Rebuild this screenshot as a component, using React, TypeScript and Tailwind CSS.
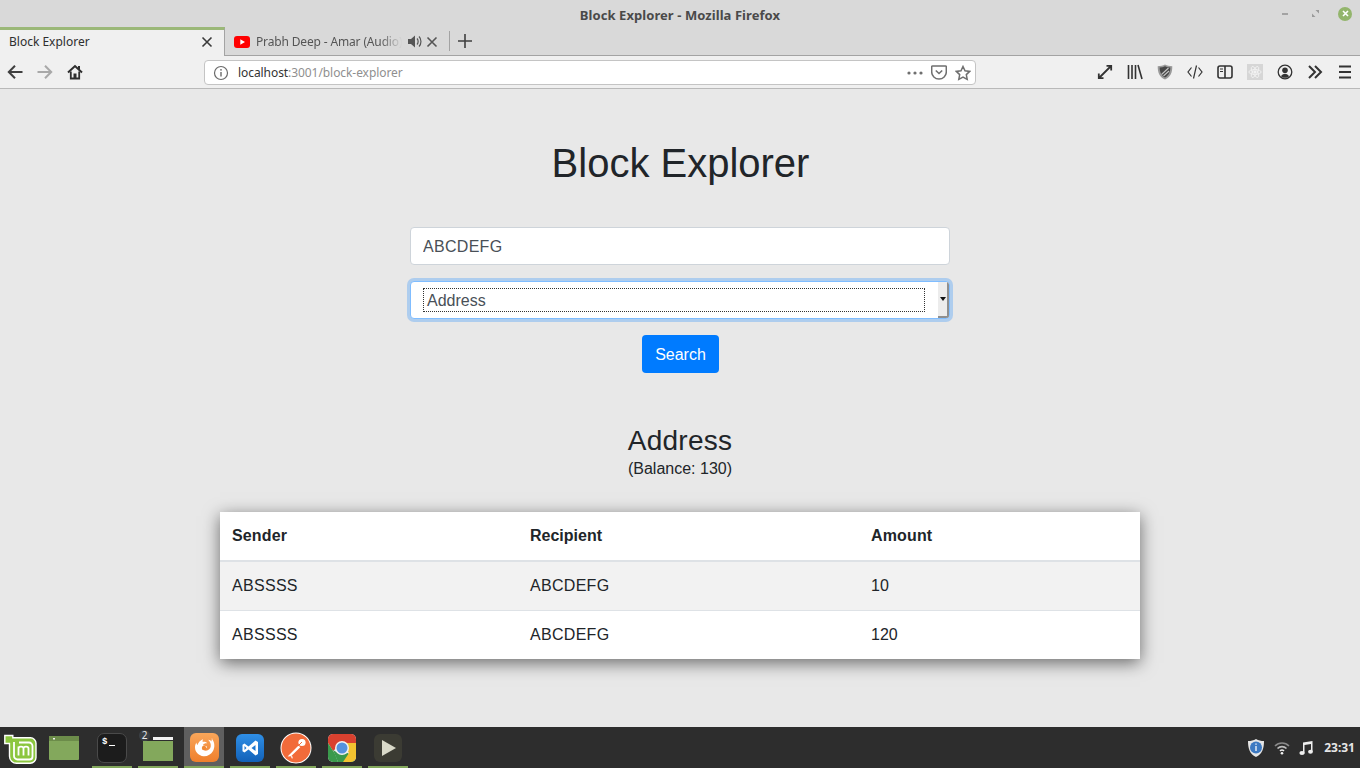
import React from "react";

const Slot = ({ children }: { children: React.ReactNode }) => (
  <div className="w-[30px] h-[32px] flex items-center justify-center shrink-0">{children}</div>
);

const S = ({ children, w = 16, h = 16, vb = "0 0 16 16" }: { children: React.ReactNode; w?: number; h?: number; vb?: string }) => (
  <svg width={w} height={h} viewBox={vb} fill="none">{children}</svg>
);

const ToolIcons = {
  back: (
    <S><path d="M15.500 8H2M8 1.800 1.800 8 8 14.200" stroke="#3f3f3f" strokeWidth="2" /></S>
  ),
  forward: (
    <S><path d="M.5 8H14M8 1.800 14.200 8 8 14.200" stroke="#a8a8a8" strokeWidth="2" /></S>
  ),
  home: (
    <S>
      <path d="M1 8.500 8 2l7 6.500" stroke="#2e2e2e" strokeWidth="2" />
      <path d="M3.800 7.500V14.500H12.200V7.500" stroke="#2e2e2e" strokeWidth="1.800" />
      <rect x="6.500" y="9.500" width="3" height="5" fill="#2e2e2e" />
      <rect x="11" y="2" width="2" height="3.500" fill="#2e2e2e" />
    </S>
  ),
  expand: (
    <S>
      <path d="M9.500 1.800H14.200V6.500M14 2 2 14M1.800 9.500V14.200H6.500" stroke="#333" strokeWidth="1.800" />
    </S>
  ),
  library: (
    <S>
      <path d="M1.500 1v14M5 1v14M8.500 1v14M11 1l4 14" stroke="#333" strokeWidth="1.600" />
    </S>
  ),
  shield: (
    <S>
      <path d="M8 .5c2 1.200 4.500 1.700 7.300 1.700 0 6-1.500 10.800-7.300 13.300C2.200 13 .7 8.200.7 2.200 3.500 2.200 6 1.700 8 .5Z" fill="#9a9a9a" />
      <path d="M8 2.300c1.600.8 3.400 1.200 5.300 1.300 0 4-1.200 7.900-5.300 10-4.100-2.100-5.300-6-5.300-10C4.600 3.500 6.400 3.100 8 2.300Z" fill="#474747" />
      <path d="M4.500 10.500 11.500 4M6.500 12l5.500-5" stroke="#c4c4c4" strokeWidth="1.100" />
    </S>
  ),
  code: (
    <S>
      <path d="M4.500 3.500 1 8l3.500 4.500M11.500 3.500 15 8l-3.500 4.500M9.500 1.500 6.500 14.500" stroke="#333" strokeWidth="1.200" />
    </S>
  ),
  sidebar: (
    <S>
      <rect x="1" y="2" width="14" height="12" rx="2" stroke="#333" strokeWidth="1.600" />
      <path d="M8 2v12" stroke="#333" strokeWidth="1.600" />
      <path d="M3 5h3M3 7.500h3" stroke="#333" strokeWidth="1.200" />
    </S>
  ),
  account: (
    <S>
      <circle cx="8" cy="8" r="6.800" stroke="#333" strokeWidth="1.300" />
      <circle cx="8" cy="6.300" r="2.800" fill="#333" />
      <path d="M4 12.300c.8-1.800 2.200-2.600 4-2.600s3.200.8 4 2.600c-1.200 1-2.600 1.500-4 1.500s-2.800-.5-4-1.500Z" fill="#333" />
    </S>
  ),
  chevrons: (
    <S>
      <path d="M2 2l6 6-6 6M8 2l6 6-6 6" stroke="#333" strokeWidth="2" />
    </S>
  ),
  menu: (
    <S>
      <path d="M2 2.500h12M2 8h12M2 13.500h12" stroke="#333" strokeWidth="2" />
    </S>
  ),
};

const ReactBox = () => (
  <div className="w-4 h-4 bg-[#d6d6d6] flex items-center justify-center">
    <svg width="14" height="14" viewBox="0 0 16 16" fill="none" stroke="#f2f2f2" strokeWidth="1">
      <ellipse cx="8" cy="8" rx="7" ry="2.800" />
      <ellipse cx="8" cy="8" rx="7" ry="2.800" transform="rotate(60 8 8)" />
      <ellipse cx="8" cy="8" rx="7" ry="2.800" transform="rotate(120 8 8)" />
      <circle cx="8" cy="8" r="1.400" fill="#f2f2f2" />
    </svg>
  </div>
);

const Close = ({ color = "#3a3a3a" }: { color?: string }) => (
  <svg width="12" height="12" viewBox="0 0 12 12" fill="none">
    <path d="M1.500 1.500l9 9M10.500 1.500l-9 9" stroke={color} strokeWidth="1.600" />
  </svg>
);

const MintLogo = () => (
  <svg width="33" height="30" viewBox="0 0 33 30">
    <path d="M.8 1.500h8v2.300h17.700a5.500 5.500 0 0 1 5.500 5.500v14.200a5.800 5.800 0 0 1-5.800 5.800H12.500a7 7 0 0 1-7-7V9.500H.8V1.500Z" fill="#8cc63f" stroke="#fff" strokeWidth="1.400" />
    <path d="M10 8v14a3.500 3.500 0 0 0 3.500 3.500h12a3 3 0 0 0 3-3V12a3.500 3.500 0 0 0-3.500-3.500H15" fill="none" stroke="#fff" strokeWidth="1.800" />
    <path d="M14.500 21.500V12.500M14.500 14.500c0-2.500 5-2.500 5 0v7M19.500 14.500c0-2.500 5-2.500 5 0v7" fill="none" stroke="#fff" strokeWidth="1.800" />
  </svg>
);

const FilesIcon = () => (
  <svg width="30" height="24" viewBox="0 0 30 24">
    <rect width="30" height="24" fill="#83a85c" rx="1" />
    <rect width="30" height="5" fill="#6c8c4a" />
    <rect x="4" y="2" width="2" height="1.500" fill="#eee" />
  </svg>
);

const Terminal = () => (
  <div className="w-[30px] h-[30px] rounded-[7px] bg-[#1c1c1c] border border-[#4a4a4a] relative">
    <span className="absolute left-[4px] top-[2px] text-[9px] leading-[12px] text-white font-['Liberation_Mono',monospace] font-bold">$</span>
    <span className="absolute left-[11px] top-[11px] w-[6px] h-[1px] bg-white" />
  </div>
);

const FolderIcon = () => (
  <div className="relative w-[30px] h-[30px]">
    <svg width="30" height="26" viewBox="0 0 30 26" className="absolute left-0 top-[3px]">
      <path d="M10 1h20v3H10Z" fill="#f2f2f2" />
      <rect y="5" width="30" height="20" fill="#83a85c" />
    </svg>
    <span className="absolute left-[-4px] top-[-3px] w-[11px] h-[11px] rounded-full bg-[#3a3f44] text-[#e8e8e8] text-[10px] leading-[11px] text-center font-['Noto_Sans',sans-serif]">2</span>
  </div>
);

const Firefox = () => (
  <svg width="29" height="29" viewBox="0 0 29 29">
    <defs>
      <linearGradient id="ff" x1="0" y1="0" x2="0" y2="1">
        <stop offset="0" stopColor="#f9a65a" />
        <stop offset="1" stopColor="#ef7f2c" />
      </linearGradient>
    </defs>
    <rect width="29" height="29" rx="6" fill="url(#ff)" />
    <path d="M21.500 5.500c3.300 3.200 3.700 8.500 1.500 12.500-2 3.600-5.700 5.500-9.500 5.200C9 22.900 5.200 19.300 5 14.800c-.1-2 .4-3.700 1.500-5.200 0 1.200.4 2 1 2.500.5-2 1.800-3.600 3.300-4.600.8-.5 1.500-.9 2.200-1.200-.4 1-.5 2-.3 2.700 1.700-.4 3.500.1 4.500 1.300-1.800-.3-3.400.4-4.200 1.500-.5.700.8 1 2.600 1.200 1.600.2 1.500 1.300.7 2-1 .9-3 1-4.300.3 1 2.100 3.600 2.900 5.700 2 2.300-1 3.500-3.500 3-6.100-.3-1.800-1.500-3.200-2.500-4.500 1.200.2 2.500.6 3.500 1.800-.2-1.100-.3-1.900.8-3Z" fill="#fff" />
    <circle cx="14" cy="15" r="2.200" fill="#f08a35" />
  </svg>
);

const VSCode = () => (
  <svg width="28" height="28" viewBox="0 0 28 28">
    <defs>
      <linearGradient id="vs" x1="0" y1="0" x2="0" y2="1">
        <stop offset="0" stopColor="#2f8fe6" />
        <stop offset="1" stopColor="#1261b8" />
      </linearGradient>
    </defs>
    <rect width="28" height="28" rx="6" fill="url(#vs)" />
    <path d="M19.500 6.500 22 8v12l-2.500 1.500-7-6-4 3-2-1.200v-6.600l2-1.200 4 3 7-6Zm0 4.500-4 3 4 3v-6ZM8.500 12v4l2-2-2-2Z" fill="#fff" />
  </svg>
);

const Postman = () => (
  <svg width="32" height="32" viewBox="0 0 32 32">
    <circle cx="16" cy="16" r="15.500" fill="#fff" />
    <circle cx="16" cy="16" r="14.500" fill="#f26b3a" />
    <path d="M7.500 24.500 18.500 13.500l1.800 1.800-9.300 8.900-3.500.3Z" fill="#fff" />
    <path d="M11 24.500l1-1 .8 2.800-1 .3Z" fill="#fff" />
    <circle cx="22" cy="10.500" r="3.600" fill="#fff" />
    <path d="M18 14l4-4" stroke="#f26b3a" strokeWidth="1" />
  </svg>
);

const Chrome = () => (
  <svg width="28" height="28" viewBox="0 0 28 28">
    <rect width="28" height="28" rx="5" fill="#e8e8e8" />
    <path d="M0 5a5 5 0 0 1 5-5h18a5 5 0 0 1 5 5v4H14L5 17 0 9Z" fill="#d9412f" />
    <path d="M0 9l7 11 3 8H5a5 5 0 0 1-5-5V9Z" fill="#3a9a4c" />
    <path d="M5 16l5 12h13a5 5 0 0 0 3-1l-6-8-8 1-7-4Z" fill="#3a9a4c" />
    <path d="M14 9h14v14a5 5 0 0 1-5 5h-8l6-9-7-10Z" fill="#f2c230" />
    <circle cx="14" cy="14" r="7" fill="#f2f2f2" />
    <circle cx="14" cy="14" r="5.500" fill="#5592de" />
  </svg>
);

const Player = () => (
  <svg width="28" height="28" viewBox="0 0 28 28">
    <rect width="28" height="28" rx="6" fill="#3b3b33" />
    <path d="M8 6v16l14-8Z" fill="#d8d8c8" />
  </svg>
);

const Running = ({ children, active }: { children: React.ReactNode; active?: boolean }) => (
  <div className={`w-10 h-[41px] shrink-0 relative flex items-center justify-center ${active ? "bg-[#5f5f5f]" : ""}`}>
    {children}
    <span className="absolute left-0 right-0 bottom-0 h-[2px] bg-[#83a85c]" />
  </div>
);

export default function App() {
  return (
    <div className="w-[1360px] h-[768px] flex flex-col overflow-hidden bg-[#e8e8e8] font-['Liberation_Sans',sans-serif]">
      {/* title bar */}
      <div className="h-[27px] bg-[#d9d9d9] relative flex items-center justify-center shrink-0 font-['Noto_Sans',sans-serif]">
        <span className="text-[13px] font-bold text-[#4a4a4a] leading-none mt-[3px] tracking-[0.07px]">Block Explorer - Mozilla Firefox</span>
        <div className="absolute right-0 top-0 h-[27px] flex">
          <div className="w-[30px] flex items-center justify-center">
            <span className="w-[6px] h-[2px] bg-[#a3a3a3]" />
          </div>
          <div className="w-[30px] flex items-center justify-center">
            <svg width="7" height="7" viewBox="0 0 7 7"><path d="M3.500 0H7v3.500ZM3.500 7H0V3.500Z" fill="#9a9a9a" /></svg>
          </div>
          <div className="w-[30px] flex items-center justify-center">
            <span className="w-[14px] h-[14px] rounded-full bg-[#93b56c] flex items-center justify-center">
              <svg width="7" height="7" viewBox="0 0 7 7"><path d="M1 1l5 5M6 1 1 6" stroke="#fff" strokeWidth="1.600" /></svg>
            </span>
          </div>
        </div>
      </div>
      {/* tabs */}
      <div className="h-[29px] bg-[#d9d9d9] flex items-stretch shrink-0 font-['Noto_Sans',sans-serif] border-b border-[#a3a3a3]">
        <div className="w-[225px] -mb-px h-[29px] bg-[#f0f0f0] border-t-[3px] border-[#9bb878] border-r border-r-[#a3a3a3] flex items-center pl-[9px] pr-[11px] pb-[2px] justify-between shrink-0">
          <span className="text-[12px] text-[#2e2e2e]">Block Explorer</span>
          <Close />
        </div>
        <div className="w-[224px] flex items-center pl-[9px] pr-[11px] pt-[1px] shrink-0">
          <svg width="16" height="12" viewBox="0 0 16 12" className="shrink-0">
            <rect width="16" height="12" rx="3" fill="#f00" />
            <path d="M6.300 3.200v5.600L11 6Z" fill="#fff" />
          </svg>
          <span className="ml-[6px] text-[12px] text-[#555] w-[146px] whitespace-nowrap overflow-hidden tracking-[-0.15px] [mask-image:linear-gradient(to_right,#000_85%,transparent)]">Prabh Deep - Amar (Audio)</span>
          <svg width="14" height="13" viewBox="0 0 14 13" className="ml-[6px] shrink-0">
            <path d="M0 4h3l4-3.500v12L3 9H0Z" fill="#555" />
            <path d="M9 3.500c1.500 1.500 1.500 4.500 0 6M11 1.500c2.600 2.600 2.600 7.400 0 10" stroke="#555" strokeWidth="1.200" fill="none" />
          </svg>
          <div className="ml-auto"><Close color="#555" /></div>
        </div>
        <div className="w-px h-[20px] bg-[#a3a3a3] self-center shrink-0" />
        <div className="w-[30px] flex items-center justify-center">
          <svg width="14" height="14" viewBox="0 0 14 14"><path d="M7 0v14M0 7h14" stroke="#3f3f3f" strokeWidth="1.600" /></svg>
        </div>
      </div>
      {/* toolbar */}
      <div className="h-[33px] bg-[#f0f0f0] border-b border-[#b9b9b9] flex items-start shrink-0">
        <Slot>{ToolIcons.back}</Slot>
        <Slot>{ToolIcons.forward}</Slot>
        <Slot>{ToolIcons.home}</Slot>
        <div className="flex-1 ml-[114px] mr-[114px] mt-[4px] h-[25px] bg-white border border-[#c4c4c4] rounded-[4px] flex items-center font-['Noto_Sans',sans-serif] text-[12px] tracking-[-0.07px]">
          <svg width="16" height="16" viewBox="0 0 16 16" className="ml-[8px]">
            <circle cx="8" cy="8" r="6.500" stroke="#6a6a6a" strokeWidth="1.200" fill="none" />
            <path d="M8 7v4.500" stroke="#6a6a6a" strokeWidth="1.400" />
            <circle cx="8" cy="4.800" r=".9" fill="#6a6a6a" />
          </svg>
          <span className="ml-[9px] text-[#333]">localhost</span>
          <span className="text-[#8f8f8f]">:3001/block-explorer</span>
          <div className="ml-auto flex items-center mr-[4px]">
            <svg width="16" height="4" viewBox="0 0 16 4" fill="#6f6f6f">
              <circle cx="2" cy="2" r="1.600" /><circle cx="8" cy="2" r="1.600" /><circle cx="14" cy="2" r="1.600" />
            </svg>
            <svg width="16" height="15" viewBox="0 0 16 15" fill="none" className="ml-[8px]">
              <path d="M1.500 1h13a.8.8 0 0 1 .8.800V7a7.300 7 0 0 1-14.600 0V1.800a.8.8 0 0 1 .8-.8Z" stroke="#6f6f6f" strokeWidth="1.500" />
              <path d="M4.800 5.500 8 8.500l3.200-3" stroke="#6f6f6f" strokeWidth="1.600" />
            </svg>
            <svg width="16" height="16" viewBox="0 0 16 16" fill="none" className="ml-[8px]">
              <path d="M8 1.500l2 4.300 4.700.6-3.400 3.200.9 4.700L8 12l-4.200 2.300.9-4.700L1.300 6.400 6 5.800Z" stroke="#6f6f6f" strokeWidth="1.500" />
            </svg>
          </div>
        </div>
        <Slot>{ToolIcons.expand}</Slot>
        <Slot>{ToolIcons.library}</Slot>
        <Slot>{ToolIcons.shield}</Slot>
        <Slot>{ToolIcons.code}</Slot>
        <Slot>{ToolIcons.sidebar}</Slot>
        <Slot><ReactBox /></Slot>
        <Slot>{ToolIcons.account}</Slot>
        <Slot>{ToolIcons.chevrons}</Slot>
        <Slot>{ToolIcons.menu}</Slot>
      </div>
      {/* page */}
      <main className="flex-1 flex flex-col items-center text-[#212529]">
        <h1 className="mt-[50px] ml-[1px] text-[40px] leading-[48px] font-normal">Block Explorer</h1>
        <input
          readOnly
          value="ABCDEFG"
          className="mt-[40px] w-[540px] h-[38px] bg-white border border-[#ced4da] rounded-[4px] px-3 pt-[2px] text-[16px] tracking-[0.3px] text-[#495057] outline-none"
        />
        <div className="mt-[16px] w-[540px] h-[38px] bg-white border border-[#80bdff] rounded-[4px] shadow-[0_0_0_3px_rgba(0,123,255,0.25)] flex items-stretch overflow-hidden">
          <div className="flex-1 flex items-center pl-3 pr-[13px]">
            <div className="w-full h-[24px] border border-dotted border-[#333] pl-[3px] pt-[1px] flex items-center text-[16px] text-[#495057]">Address</div>
          </div>
          <div className="w-[11px] bg-[#ececec] border-r-2 border-b-2 border-[#8f8f8f] flex items-center justify-center shrink-0">
            <svg width="6" height="4" viewBox="0 0 6 4"><path d="M0 0h6L3 4Z" fill="#111" /></svg>
          </div>
        </div>
        <button className="mt-[16px] ml-[1px] w-[77px] h-[38px] pt-[2px] bg-[#007bff] rounded-[4px] text-white text-[16px]">Search</button>
        <h3 className="mt-[51px] text-[28px] leading-[33px] font-normal tracking-[0.25px]">Address</h3>
        <p className="text-[16px] leading-[24px]">(Balance: 130)</p>
        <table className="mt-[31px] w-[920px] table-fixed border-collapse bg-white shadow-[0_4px_16px_rgba(0,0,0,0.55)] text-[16px]">
          <colgroup>
            <col className="w-[298px]" />
            <col className="w-[341px]" />
            <col />
          </colgroup>
          <thead>
            <tr className="border-b-2 border-[#dee2e6] text-left h-[49px]">
              <th className="px-3 font-bold tracking-[0.15px]">Sender</th>
              <th className="px-3 font-bold">Recipient</th>
              <th className="px-3 font-bold tracking-[0.15px]">Amount</th>
            </tr>
          </thead>
          <tbody>
            <tr className="bg-[#f2f2f2] h-[49px]">
              <td className="px-3 tracking-[0.3px]">ABSSSS</td>
              <td className="px-3 tracking-[0.3px]">ABCDEFG</td>
              <td className="px-3">10</td>
            </tr>
            <tr className="border-t border-[#dee2e6] h-[49px]">
              <td className="px-3 tracking-[0.3px]">ABSSSS</td>
              <td className="px-3 tracking-[0.3px]">ABCDEFG</td>
              <td className="px-3">120</td>
            </tr>
          </tbody>
        </table>
      </main>
      {/* taskbar */}
      <footer className="h-[41px] bg-[#2d2d2d] flex items-center shrink-0">
        <div className="w-[46px] flex justify-start pl-[4px] pt-[2px] shrink-0"><MintLogo /></div>
        <div className="w-10 h-[41px] flex items-center pl-[3px] shrink-0"><FilesIcon /></div>
        <div className="flex gap-[6px] ml-[6px]">
          <Running><Terminal /></Running>
          <Running><FolderIcon /></Running>
          <Running active><Firefox /></Running>
          <Running><VSCode /></Running>
          <Running><Postman /></Running>
          <Running><Chrome /></Running>
          <Running><Player /></Running>
        </div>
        <div className="ml-auto flex items-center pr-[5px]">
          <svg width="20" height="20" viewBox="0 0 20 20" className="mr-[8px]">
            <path d="M10 1c2.500 1.500 5 2 8 2 0 7-1.500 13-8 16C3.500 16 2 10 2 3c3 0 5.500-.5 8-2Z" fill="#e6e6e6" />
            <circle cx="10" cy="9.500" r="6" fill="#3c79c2" />
            <path d="M10 8v5M10 5.500v1.300" stroke="#dfe9f5" strokeWidth="1.500" />
          </svg>
          <svg width="16" height="14" viewBox="0 0 16 14" fill="none" className="mr-[9px]">
            <path d="M1 5c4-4 10-4 14 0" stroke="#8a8a8a" strokeWidth="1.600" />
            <path d="M3.500 7.500c2.500-2.500 6.500-2.500 9 0" stroke="#bdbdbd" strokeWidth="1.600" />
            <path d="M6 10c1.200-1.200 2.800-1.200 4 0" stroke="#e8e8e8" strokeWidth="1.600" />
            <circle cx="8" cy="12.300" r="1.300" fill="#f2f2f2" />
          </svg>
          <svg width="14" height="14" viewBox="0 0 14 14" className="mr-[11px]" fill="#eee">
            <path d="M4 1.500 13.500 0v10.500h-1.500V3L5.500 4v8.500H4Z" />
            <ellipse cx="3" cy="12" rx="2.600" ry="2" />
            <ellipse cx="11.500" cy="10.800" rx="2.400" ry="2" />
          </svg>
          <span className="text-[12px] font-bold text-[#e6e6e6] font-['Noto_Sans',sans-serif]">23:31</span>
        </div>
      </footer>
    </div>
  );
}
